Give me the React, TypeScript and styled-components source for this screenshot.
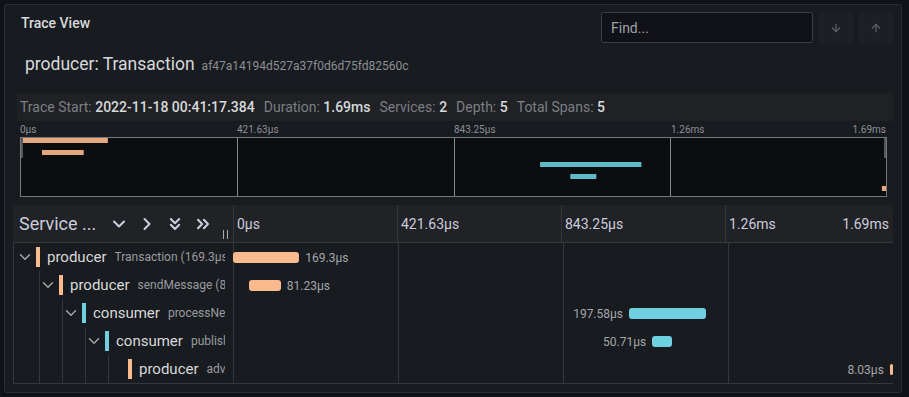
import React from "react";
import styled, { createGlobalStyle } from "styled-components";
import {
  ArrowDown,
  ArrowUp,
  ChevronDown,
  ChevronRight,
  ChevronsDown,
  ChevronsRight,
} from "lucide-react";
import { IoIosArrowDown } from "react-icons/io";

const ORANGE = "#f9bb8e";
const CYAN = "#6ed0e0";
const TOTAL = 1686.5;

interface Span {
  depth: number;
  service: string;
  operation: string;
  start: number;
  duration: number;
  label: string;
  color: string;
  hasChildren: boolean;
  labelLeft?: boolean;
}

const spans: Span[] = [
  { depth: 0, service: "producer", operation: "Transaction (169.3μs)", start: 0, duration: 169.3, label: "169.3μs", color: ORANGE, hasChildren: true },
  { depth: 1, service: "producer", operation: "sendMessage (81.23μs)", start: 41, duration: 81.23, label: "81.23μs", color: ORANGE, hasChildren: true },
  { depth: 2, service: "consumer", operation: "processNewMessage (197.58μs)", start: 1012, duration: 197.58, label: "197.58μs", color: CYAN, hasChildren: true, labelLeft: true },
  { depth: 3, service: "consumer", operation: "publishResult (50.71μs)", start: 1071, duration: 50.71, label: "50.71μs", color: CYAN, hasChildren: true, labelLeft: true },
  { depth: 4, service: "producer", operation: "advance (8.03μs)", start: 1678.5, duration: 8.03, label: "8.03μs", color: ORANGE, hasChildren: false, labelLeft: true },
];

const ticks = ["0μs", "421.63μs", "843.25μs", "1.26ms"];
const END_TICK = "1.69ms";

const GlobalStyle = createGlobalStyle`
  * { box-sizing: border-box; }
  body {
    margin: 0;
    background: #111217;
    font-family: Roboto, "Liberation Sans", sans-serif;
    color: #ccccdc;
  }
`;

const Panel = styled.div`
  margin: 4px;
  width: 898px;
  height: 389px;
  background: #181b1f;
  border: 1px solid #2a2d32;
  border-radius: 3px;
  padding: 0 8px;
  overflow: hidden;
`;

const HeaderBar = styled.div`
  display: flex;
  align-items: flex-start;
  justify-content: space-between;
  height: 45px;
`;

const PanelTitle = styled.h2`
  margin: 0;
  padding: 10px 0 0 8px;
  font-size: 14px;
  line-height: 16px;
  font-weight: 500;
  color: #d8d9da;
`;

const Search = styled.div`
  display: flex;
  gap: 6px;
  margin-top: 7px;
`;

const FindInput = styled.div`
  width: 212px;
  height: 31px;
  background: #111217;
  border: 1px solid #3a3d42;
  border-radius: 2px;
  padding-left: 9px;
  display: flex;
  align-items: center;
  font-size: 14px;
  color: #9fa1a5;
`;

const NavButton = styled.div`
  width: 34px;
  height: 31px;
  background: #1d1f24;
  border-radius: 2px;
  display: flex;
  align-items: center;
  justify-content: center;
  color: #5c5f66;
`;

const TraceTitle = styled.div`
  height: 28px;
  display: flex;
  align-items: baseline;
  padding: 4px 0 0 12px;
  gap: 7px;
`;

const TraceName = styled.span`
  font-size: 17.5px;
  color: #d8d9da;
`;

const TraceId = styled.span`
  font-size: 12px;
  color: #8e8f94;
`;

const Stats = styled.div`
  margin: 15px 0 0 4px;
  height: 28px;
  background: #1f2125;
  display: flex;
  align-items: center;
  padding-left: 3px;
  font-size: 14px;
  gap: 9px;
`;

const Stat = styled.span`
  color: #7d7f84;
  white-space: nowrap;

  b {
    font-weight: 500;
    color: #d8d9da;
  }
`;

const Minimap = styled.div`
  margin: 0 7px;
`;

const TickRow = styled.div`
  display: flex;
  height: 16px;
  align-items: center;
`;

const Tick = styled.div<{ $last?: boolean }>`
  flex: 1;
  display: flex;
  justify-content: space-between;
  font-size: 10px;
  color: #8e8f94;
  padding-right: ${(p) => (p.$last ? "0" : "2px")};
`;

const MiniCanvas = styled.svg`
  display: block;
`;

const Table = styled.div`
  margin-top: 8px;
`;

const HeaderRow = styled.div`
  display: flex;
  height: 38px;
  background: #202226;
  border-bottom: 1px solid #35373c;
`;

const HeaderName = styled.div`
  position: relative;
  width: 220px;
  display: flex;
  align-items: center;
  padding-left: 6px;
`;

const HeaderLabel = styled.span`
  font-size: 18px;
  color: #ccccdc;
  margin-right: 9px;
`;

const HeaderIcon = styled.span`
  width: 28px;
  display: flex;
  justify-content: center;
  color: #ccccdc;
`;

const Resizer = styled.div`
  position: absolute;
  right: 5px;
  bottom: 3px;
  width: 5px;
  height: 9px;
  border-left: 1px solid #a8a9ad;
  border-right: 1px solid #a8a9ad;
`;

const HeaderTicks = styled.div`
  flex: 1;
  display: flex;
`;

const HeaderTick = styled.div<{ $last?: boolean }>`
  flex: 1;
  display: flex;
  justify-content: space-between;
  align-items: center;
  border-left: 1px solid #35373c;
  padding: 0 ${(p) => (p.$last ? "4px" : "0")} 0 3px;
  font-size: 14px;
  color: #ccccdc;
`;

const Rows = styled.div`
  border-bottom: 1px solid #35373c;
`;

const Row = styled.div`
  display: flex;
  height: 28px;
`;

const NameCell = styled.div`
  width: 220px;
  display: flex;
  align-items: center;
  border-left: 1px solid #35373c;
  padding: 0 8px 0 2px;
  overflow: hidden;
  white-space: nowrap;
`;

const Indent = styled.span<{ $guide: boolean }>`
  flex: none;
  width: 23px;
  align-self: stretch;
  border-left: 1px solid ${(p) => (p.$guide ? "#35373c" : "transparent")};
`;

const Toggle = styled.span<{ $guide: boolean }>`
  flex: none;
  width: 20px;
  align-self: stretch;
  display: flex;
  align-items: center;
  border-left: 1px solid ${(p) => (p.$guide ? "#35373c" : "transparent")};
  color: #a3a4a8;
`;

const ColorBar = styled.span<{ $color: string }>`
  flex: none;
  width: 4px;
  height: 20px;
  background: ${(p) => p.$color};
`;

const Service = styled.span`
  font-size: 15px;
  color: #d8d9da;
  margin-left: 7px;
`;

const Operation = styled.span`
  font-size: 12px;
  color: #9a9b9f;
  margin-left: 8px;
  overflow: hidden;
`;

const TimeCell = styled.div`
  position: relative;
  flex: 1;
  background: repeating-linear-gradient(
    to right,
    #35373c 0,
    #35373c 1px,
    transparent 1px,
    transparent 165px
  );
`;

const Bar = styled.div<{ $color: string }>`
  position: absolute;
  top: 50%;
  height: 11px;
  margin-top: -5px;
  min-width: 3px;
  border-radius: 3px;
  background: ${(p) => p.$color};
`;

const BarLabel = styled.span<{ $left?: boolean }>`
  position: absolute;
  top: 50%;
  transform: translateY(-50%);
  ${(p) => (p.$left ? "right: calc(100% + 6px);" : "left: calc(100% + 6px);")}
  font-size: 12px;
  color: #a5a6aa;
  white-space: nowrap;
`;

const MINI_W = 867;
const MINI_H = 60;

const MinimapCanvas: React.FC = () => {
  const inner = MINI_W - 2;
  return (
    <MiniCanvas width={MINI_W} height={MINI_H}>
      <rect x={0.5} y={0.5} width={MINI_W - 1} height={MINI_H - 1} fill="#0c0d0f" stroke="#76787c" />
      {[1, 2, 3].map((i) => (
        <line key={i} x1={Math.round((MINI_W / 4) * i) + 0.5} x2={Math.round((MINI_W / 4) * i) + 0.5} y1={1} y2={MINI_H - 1} stroke="#85878b" />
      ))}
      {spans.map((s, i) => (
        <rect
          key={s.label}
          x={1 + (s.start / TOTAL) * inner}
          y={1 + i * 12}
          width={Math.max(2, (s.duration / TOTAL) * inner)}
          height={5}
          fill={s.color === ORANGE ? "#e5a77f" : "#5fbac8"}
        />
      ))}
      <rect x={1} y={1} width={2} height={20} fill="#55575c" />
      <rect x={MINI_W - 3} y={1} width={2} height={20} fill="#55575c" />
    </MiniCanvas>
  );
};

const SpanRow: React.FC<{ span: Span }> = ({ span }) => (
  <Row>
    <NameCell>
      {Array.from({ length: span.depth }).map((_, k) => (
        <Indent key={k} $guide={k > 0} />
      ))}
      <Toggle $guide={span.depth > 0}>
        {span.hasChildren && <IoIosArrowDown size={16} />}
      </Toggle>
      <ColorBar $color={span.color} />
      <Service>{span.service}</Service>
      <Operation>{span.operation}</Operation>
    </NameCell>
    <TimeCell>
      <Bar
        $color={span.color}
        style={{
          left: `${(span.start / TOTAL) * 100}%`,
          width: `${(span.duration / TOTAL) * 100}%`,
        }}
      >
        <BarLabel $left={span.labelLeft}>{span.label}</BarLabel>
      </Bar>
    </TimeCell>
  </Row>
);

const App: React.FC = () => {
  return (
    <>
      <GlobalStyle />
      <Panel>
        <HeaderBar>
          <PanelTitle>Trace View</PanelTitle>
          <Search>
            <FindInput>Find...</FindInput>
            <NavButton>
              <ArrowDown size={12} strokeWidth={2.5} />
            </NavButton>
            <NavButton>
              <ArrowUp size={12} strokeWidth={2.5} />
            </NavButton>
          </Search>
        </HeaderBar>

        <TraceTitle>
          <TraceName>producer: Transaction</TraceName>
          <TraceId>af47a14194d527a37f0d6d75fd82560c</TraceId>
        </TraceTitle>

        <Stats>
          <Stat>
            Trace Start: <b>2022-11-18 00:41:17.384</b>
          </Stat>
          <Stat>
            Duration: <b>1.69ms</b>
          </Stat>
          <Stat>
            Services: <b>2</b>
          </Stat>
          <Stat>
            Depth: <b>5</b>
          </Stat>
          <Stat>
            Total Spans: <b>5</b>
          </Stat>
        </Stats>

        <Minimap>
          <TickRow>
            {ticks.map((t, i) => (
              <Tick key={t} $last={i === ticks.length - 1}>
                <span>{t}</span>
                {i === ticks.length - 1 && <span>{END_TICK}</span>}
              </Tick>
            ))}
          </TickRow>
          <MinimapCanvas />
        </Minimap>

        <Table>
          <HeaderRow>
            <HeaderName>
              <HeaderLabel>Service ...</HeaderLabel>
              <HeaderIcon>
                <ChevronDown size={20} strokeWidth={2.5} />
              </HeaderIcon>
              <HeaderIcon>
                <ChevronRight size={20} strokeWidth={2.5} />
              </HeaderIcon>
              <HeaderIcon>
                <ChevronsDown size={20} strokeWidth={2.5} />
              </HeaderIcon>
              <HeaderIcon>
                <ChevronsRight size={20} strokeWidth={2.5} />
              </HeaderIcon>
              <Resizer />
            </HeaderName>
            <HeaderTicks>
              {ticks.map((t, i) => (
                <HeaderTick key={t} $last={i === ticks.length - 1}>
                  <span>{t}</span>
                  {i === ticks.length - 1 && <span>{END_TICK}</span>}
                </HeaderTick>
              ))}
            </HeaderTicks>
          </HeaderRow>
          <Rows>
            {spans.map((s) => (
              <SpanRow key={s.label} span={s} />
            ))}
          </Rows>
        </Table>
      </Panel>
    </>
  );
};

export default App;
